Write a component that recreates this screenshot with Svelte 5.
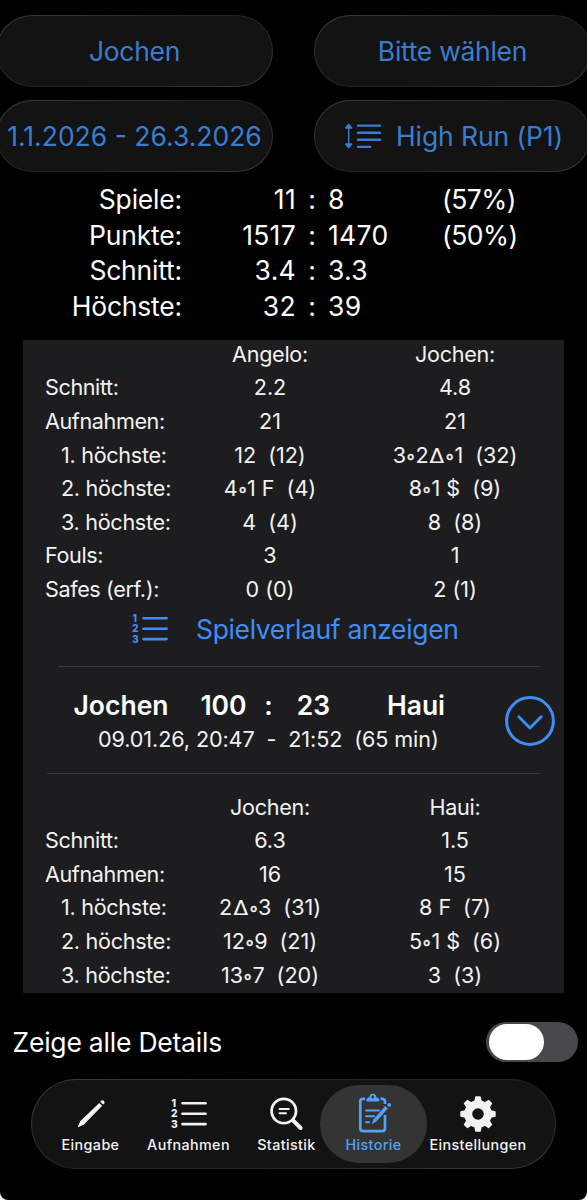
<script lang="ts">
  type Row = { label: string; sub?: boolean; a: string; b: string };

  const summary = [
    { label: 'Spiele:', a: '11', b: '8', share: '(57%)' },
    { label: 'Punkte:', a: '1517', b: '1470', share: '(50%)' },
    { label: 'Schnitt:', a: '3.4', b: '3.3', share: '' },
    { label: 'Höchste:', a: '32', b: '39', share: '' }
  ];

  const firstGame: Row[] = [
    { label: '', a: 'Angelo:', b: 'Jochen:' },
    { label: 'Schnitt:', a: '2.2', b: '4.8' },
    { label: 'Aufnahmen:', a: '21', b: '21' },
    { label: '1. höchste:', sub: true, a: '12  (12)', b: '3∘2Δ∘1  (32)' },
    { label: '2. höchste:', sub: true, a: '4∘1 F  (4)', b: '8∘1 $  (9)' },
    { label: '3. höchste:', sub: true, a: '4  (4)', b: '8  (8)' },
    { label: 'Fouls:', a: '3', b: '1' },
    { label: 'Safes (erf.):', a: '0 (0)', b: '2 (1)' }
  ];

  const secondGame: Row[] = [
    { label: '', a: 'Jochen:', b: 'Haui:' },
    { label: 'Schnitt:', a: '6.3', b: '1.5' },
    { label: 'Aufnahmen:', a: '16', b: '15' },
    { label: '1. höchste:', sub: true, a: '2Δ∘3  (31)', b: '8 F  (7)' },
    { label: '2. höchste:', sub: true, a: '12∘9  (21)', b: '5∘1 $  (6)' },
    { label: '3. höchste:', sub: true, a: '13∘7  (20)', b: '3  (3)' }
  ];

  // split a run into plain text and its rack / break marks
  const parts = (run: string) => run.split(/([∘Δ])/).filter(Boolean);

  let active = $state('Historie');
  let showAll = $state(false);
</script>

{#snippet run(text: string)}
  <span class="value" class:name={text.endsWith(':')}>{#each parts(text) as part}{#if part === '∘'}<span class="ring">∘</span>{:else if part === 'Δ'}<span class="rack">Δ</span>{:else}{part}{/if}{/each}</span>
{/snippet}

{#snippet stats(rows: Row[])}
  <div class="stats">
    {#each rows as row}
      <div class="stat-row">
        <span class="stat-label" class:sub={row.sub}>{row.label}</span>
        {@render run(row.a)}
        {@render run(row.b)}
      </div>
    {/each}
  </div>
{/snippet}

{#snippet numberedList()}
  <svg class="list-icon" viewBox="0 0 36 30" width="36" height="30">
    <g fill="currentColor" font-family="Inter, sans-serif" font-size="10.2" font-weight="800">
      <text x="0.4" y="8">1</text>
      <text x="0" y="18.4">2</text>
      <text x="0" y="28.8">3</text>
    </g>
    <path class="list-lines" d="M11.5 4.3H34.6M11.5 14.7H34.6M11.5 25.1H34.6" />
  </svg>
{/snippet}

<div class="app">
  <div class="filters">
    <button class="pill">Jochen</button>
    <button class="pill">Bitte wählen</button>
    <button class="pill dates">1.1.2026 - 26.3.2026</button>
    <button class="pill sort">
      <svg viewBox="0 0 36 26" width="36" height="26">
        <path d="M3.7 5V21" stroke="currentColor" stroke-width="1.4" />
        <path
          d="M3.7 1.4L6.7 5H.7ZM3.7 24.6L6.7 21H.7Z"
          fill="currentColor"
          stroke="currentColor"
          stroke-width="1.6"
          stroke-linejoin="round"
        />
        <path
          d="M13 2.6H35M13 9.7H35M13 16.8H35M13 23.9H25"
          stroke="currentColor"
          stroke-width="2.4"
          stroke-linecap="round"
        />
      </svg>
      <span>High Run (P1)</span>
    </button>
  </div>

  <div class="summary">
    {#each summary as item}
      <div class="summary-row">
        <span class="caption">{item.label}</span>
        <span class="total left">{item.a}</span>
        <span class="colon">:</span>
        <span class="total">{item.b}</span>
        <span class="share">{item.share}</span>
      </div>
    {/each}
  </div>

  <div class="games">
    {@render stats(firstGame)}
    <button class="history-link">
      {@render numberedList()}
      <span>Spielverlauf anzeigen</span>
    </button>
    <div class="game">
      <div class="game-info">
        <div class="score">
          <span>Jochen</span>
          <span>100</span>
          <span>:</span>
          <span>23</span>
          <span>Haui</span>
        </div>
        <div class="time">09.01.26, 20:47  -  21:52  (65 min)</div>
      </div>
      <button class="expand" aria-label="Details">
        <svg viewBox="0 0 50 50" width="50" height="50" fill="none" stroke="currentColor">
          <circle cx="25" cy="25" r="23.4" stroke-width="3" />
          <path
            d="M13.8 20.8L25 32L36.2 20.8"
            stroke-width="2.9"
            stroke-linecap="round"
            stroke-linejoin="round"
          />
        </svg>
      </button>
    </div>
    {@render stats(secondGame)}
  </div>

  <div class="details">
    <span>Zeige alle Details</span>
    <button
      class="toggle"
      class:on={showAll}
      aria-label="Zeige alle Details"
      onclick={() => (showAll = !showAll)}
    >
      <span class="knob"></span>
    </button>
  </div>

  <nav class="tabs">
    <button class="tab" class:active={active === 'Eingabe'} onclick={() => (active = 'Eingabe')}>
      <svg viewBox="0 0 40 40" width="40" height="40" fill="currentColor">
        <path d="M28.2 8.9L31.2 11.7L13.2 30.2L7.8 33.1Q6.8 33.4 7 32.3L9.4 27Z" />
        <path d="M29.3 7.8L30.4 6.6Q31.5 5.7 32.9 6.9Q34.2 8.4 33.3 9.4L32.1 10.6Z" />
      </svg>
      <span>Eingabe</span>
    </button>
    <button
      class="tab"
      class:active={active === 'Aufnahmen'}
      onclick={() => (active = 'Aufnahmen')}
    >
      {@render numberedList()}
      <span>Aufnahmen</span>
    </button>
    <button
      class="tab"
      class:active={active === 'Statistik'}
      onclick={() => (active = 'Statistik')}
    >
      <svg viewBox="0 0 40 40" width="40" height="40" fill="none" stroke="currentColor">
        <circle cx="16.8" cy="17" r="12.2" stroke-width="2.8" />
        <path d="M26 26.3L33.6 34" stroke-width="4" stroke-linecap="round" />
        <path d="M12.6 15H21.8M12.6 19.2H19" stroke-width="2" stroke-linecap="round" />
      </svg>
      <span>Statistik</span>
    </button>
    <button
      class="tab"
      class:active={active === 'Historie'}
      onclick={() => (active = 'Historie')}
    >
      <svg viewBox="0 0 40 40" width="40" height="40" fill="none" stroke="currentColor">
        <path
          d="M11 4.8H9Q6.3 4.8 6.3 7.5V34Q6.3 37.2 9.3 37.2H28Q31 37.2 31 34V21M26.5 4.8H28Q31 4.8 31 7.5V10"
          stroke-width="2.7"
        />
        <path
          d="M12.4 7.6Q12 4 14.4 3.6L15.4 3.3A3.4 3.6 0 0 1 22.2 3.3L23.2 3.6Q25.6 4 25.2 7.6Z"
          fill="currentColor"
          stroke="none"
        />
        <circle class="hole" cx="18.8" cy="3" r="1.4" stroke="none" />
        <path d="M12 16.6H25M12 22.2H20M12 28.3H15" stroke-width="2" stroke-linecap="round" />
        <path
          d="M31.3 12.4L33.5 14.6L22.3 27.2L18.2 29.6L20 25.2Z"
          fill="currentColor"
          stroke-width=".7"
        />
        <circle cx="35.2" cy="10.9" r="1.9" fill="currentColor" stroke="none" />
      </svg>
      <span>Historie</span>
    </button>
    <button
      class="tab"
      class:active={active === 'Einstellungen'}
      onclick={() => (active = 'Einstellungen')}
    >
      <svg viewBox="0 0 40 40" width="40" height="40" fill="none" stroke="currentColor">
        <circle cx="20" cy="20" r="9.8" stroke-width="8" />
        {#each [0, 45, 90, 135, 180, 225, 270, 315] as angle}
          <path
            d="M16.8 8L17.9 3H22.1L23.2 8Z"
            transform={`rotate(${angle} 20 20)`}
            fill="currentColor"
            stroke-width="1.4"
            stroke-linejoin="round"
          />
        {/each}
      </svg>
      <span>Einstellungen</span>
    </button>
  </nav>
</div>

<style>
  :global(body) {
    margin: 0;
    background: #fff;
  }

  .app {
    box-sizing: border-box;
    width: 587px;
    height: 1200px;
    padding-top: 15px;
    overflow: hidden;
    background: #000;
    border-radius: 0 0 8px 8px;
    color: #fff;
    font-family: Inter, 'Liberation Sans', sans-serif;
    font-size: 26.5px;
    letter-spacing: -0.3px;
  }

  button {
    margin: 0;
    padding: 0;
    border: 0;
    background: none;
    color: inherit;
    font: inherit;
    letter-spacing: inherit;
    white-space: nowrap;
    cursor: pointer;
  }

  svg {
    display: block;
    flex: none;
    overflow: visible;
    letter-spacing: 0;
  }

  .filters {
    display: grid;
    grid-template-columns: 277px 277px;
    grid-auto-rows: 72px;
    column-gap: 41px;
    row-gap: 13px;
    margin-left: -4px;
  }

  .pill {
    display: flex;
    align-items: center;
    justify-content: center;
    gap: 15px;
    border: 1px solid transparent;
    border-radius: 36px;
    background:
      linear-gradient(#131313, #131313) padding-box,
      linear-gradient(160deg, #3c3c3c, #222 45%, #222 60%, #3a3a3a) border-box;
    color: #3a7dd0;
  }

  .dates {
    letter-spacing: 0;
  }

  .sort {
    letter-spacing: -0.1px;
    padding-left: 3px;
  }

  .summary {
    padding-top: 10px;
  }

  .summary-row {
    display: grid;
    grid-template-columns: 182px 114px 32px 115px 1fr;
    line-height: 35.6px;
  }

  .caption,
  .left {
    text-align: right;
  }

  .caption {
    letter-spacing: -0.2px;
  }

  .total {
    letter-spacing: 0.3px;
  }

  .colon {
    text-align: center;
  }

  .share {
    margin-left: -1px;
    letter-spacing: -0.5px;
  }

  .games {
    height: 653px;
    width: 541px;
    margin: 15.6px 0 0 23px;
    overflow: hidden;
    background: #1d1d1f;
  }

  .stats {
    margin-top: -2.1px;
    padding-left: 22px;
    font-size: 21.6px;
    color: #f2f2f2;
  }

  .stat-row {
    display: grid;
    grid-template-columns: 132.5px 185px 185px;
    line-height: 33.6px;
    height: 33.6px;
    white-space: pre;
  }

  .stat-label {
    letter-spacing: -0.4px;
  }

  .sub {
    padding-left: 16px;
    letter-spacing: -0.3px;
  }

  .value {
    text-align: center;
    letter-spacing: -0.05px;
  }

  .name {
    letter-spacing: -0.3px;
  }

  .ring {
    margin: 0 -0.8px;
    font-size: 17.5px;
    line-height: 1;
    vertical-align: 1px;
    -webkit-text-stroke: 0.6px;
  }

  .rack {
    display: inline-block;
    margin: 0 1.5px;
    font-size: 20px;
    line-height: 1;
    transform: scaleX(1.15);
  }

  .history-link {
    display: flex;
    align-items: center;
    gap: 28px;
    height: 44px;
    margin-left: 109px;
    color: #3f8ef7;
    letter-spacing: -0.36px;
  }

  .list-lines {
    fill: none;
    stroke: currentColor;
    stroke-width: 2.6;
    stroke-linecap: round;
  }

  .game {
    display: flex;
    align-items: center;
    justify-content: space-between;
    box-sizing: border-box;
    height: 108.6px;
    margin-top: 15.3px;
    padding: 1px 9px 0 0;
    background:
      linear-gradient(#39393b, #39393b) 35px 0 / 482px 1.4px no-repeat,
      linear-gradient(#39393b, #39393b) 24px 100% / 493px 1.4px no-repeat;
  }

  .game + .stats {
    margin-top: 16.1px;
  }

  .game-info {
    padding-top: 3.4px;
  }

  .score {
    display: grid;
    grid-template-columns: 126px 79px 11px 79px 126px;
    padding-left: 35px;
    font-weight: 600;
    letter-spacing: 0;
    line-height: 34px;
    text-align: center;
  }

  .time {
    padding-left: 75px;
    font-size: 21.6px;
    letter-spacing: -0.1px;
    line-height: 34px;
    white-space: pre;
    color: #f2f2f2;
  }

  .expand {
    color: #3f8ef7;
  }

  .details {
    display: flex;
    align-items: center;
    justify-content: space-between;
    height: 40px;
    margin-top: 29px;
    padding: 0 9px 0 12.5px;
    letter-spacing: -0.22px;
  }

  .toggle {
    display: flex;
    box-sizing: border-box;
    width: 92px;
    height: 40px;
    padding: 2px 3px;
    border-radius: 20px;
    background: #48484a;
  }

  .toggle.on {
    justify-content: flex-end;
    background: #34c759;
  }

  .knob {
    width: 55px;
    height: 36px;
    border-radius: 18px;
    background: #fff;
  }

  .tabs {
    display: grid;
    grid-template-columns: 67px 129px 67px 107px 102px;
    align-items: center;
    box-sizing: border-box;
    width: 525px;
    height: 90px;
    margin: 17px 0 0 31px;
    padding-left: 25px;
    border: 1px solid transparent;
    border-radius: 45px;
    background:
      linear-gradient(#131313, #131313) padding-box,
      linear-gradient(165deg, #3c3c3c, #222 45%, #222 60%, #3a3a3a) border-box;
    color: #f2f2f2;
    font-size: 14.3px;
    font-weight: 500;
    letter-spacing: 0.4px;
  }

  .tab {
    display: flex;
    flex-direction: column;
    align-items: center;
    box-sizing: border-box;
    height: 78px;
    padding-top: 9px;
    border-radius: 39px;
    line-height: 20px;
  }

  .tab.active {
    background: #343434;
    color: #4fa3f9;
  }

  .tab > span {
    margin-top: 1px;
  }

  .tab .list-icon {
    margin: 5px 0;
  }

  .hole {
    fill: #343434;
  }
</style>
